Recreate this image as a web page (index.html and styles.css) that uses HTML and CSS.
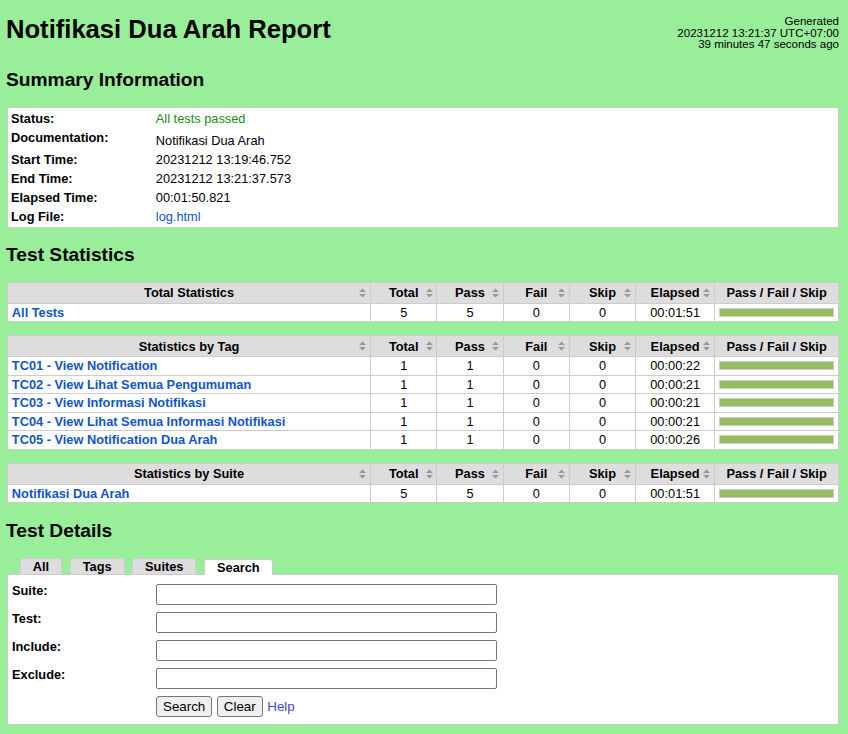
FILE: index.html
```html
<!DOCTYPE html>
<html lang="id">
<head>
<meta charset="utf-8">
<title>Notifikasi Dua Arah Report</title>
<link rel="stylesheet" href="styles.css">
</head>
<body>
<div class="page">
  <div class="header">
    <h1>Notifikasi Dua Arah Report</h1>
    <div class="generated">Generated<br>20231212 13:21:37 UTC+07:00<br>39 minutes 47 seconds ago</div>
  </div>

  <h2>Summary Information</h2>
  <table class="details">
    <tr><th>Status:</th><td class="pass">All tests passed</td></tr>
    <tr><th>Documentation:</th><td><div class="doc">Notifikasi Dua Arah</div></td></tr>
    <tr><th>Start Time:</th><td>20231212 13:19:46.752</td></tr>
    <tr><th>End Time:</th><td>20231212 13:21:37.573</td></tr>
    <tr><th>Elapsed Time:</th><td>00:01:50.821</td></tr>
    <tr><th>Log File:</th><td><a href="#">log.html</a></td></tr>
  </table>

  <h2>Test Statistics</h2>

  <table class="statistics">
    <thead>
      <tr>
        <th class="col-name"><div class="th-inner"><span class="th-text">Total Statistics</span><svg class="sort" width="7" height="10" viewBox="0 0 7 10"><path d="M3.5 0.5 7 4H0z M0 6h7L3.5 9.5z"/></svg></div></th>
        <th class="col-stat"><div class="th-inner"><span class="th-text">Total</span><svg class="sort" width="7" height="10" viewBox="0 0 7 10"><path d="M3.5 0.5 7 4H0z M0 6h7L3.5 9.5z"/></svg></div></th>
        <th class="col-stat"><div class="th-inner"><span class="th-text">Pass</span><svg class="sort" width="7" height="10" viewBox="0 0 7 10"><path d="M3.5 0.5 7 4H0z M0 6h7L3.5 9.5z"/></svg></div></th>
        <th class="col-stat"><div class="th-inner"><span class="th-text">Fail</span><svg class="sort" width="7" height="10" viewBox="0 0 7 10"><path d="M3.5 0.5 7 4H0z M0 6h7L3.5 9.5z"/></svg></div></th>
        <th class="col-stat"><div class="th-inner"><span class="th-text">Skip</span><svg class="sort" width="7" height="10" viewBox="0 0 7 10"><path d="M3.5 0.5 7 4H0z M0 6h7L3.5 9.5z"/></svg></div></th>
        <th class="col-elapsed"><div class="th-inner"><span class="th-text">Elapsed</span><svg class="sort" width="7" height="10" viewBox="0 0 7 10"><path d="M3.5 0.5 7 4H0z M0 6h7L3.5 9.5z"/></svg></div></th>
        <th class="col-graph">Pass / Fail / Skip</th>
      </tr>
    </thead>
    <tbody>
      <tr><td><a class="stat-name" href="#">All Tests</a></td><td class="num">5</td><td class="num">5</td><td class="num">0</td><td class="num">0</td><td class="num">00:01:51</td><td><div class="graph"><div class="pass-bar"></div></div></td></tr>
    </tbody>
  </table>

  <table class="statistics">
    <thead>
      <tr>
        <th class="col-name"><div class="th-inner"><span class="th-text">Statistics by Tag</span><svg class="sort" width="7" height="10" viewBox="0 0 7 10"><path d="M3.5 0.5 7 4H0z M0 6h7L3.5 9.5z"/></svg></div></th>
        <th class="col-stat"><div class="th-inner"><span class="th-text">Total</span><svg class="sort" width="7" height="10" viewBox="0 0 7 10"><path d="M3.5 0.5 7 4H0z M0 6h7L3.5 9.5z"/></svg></div></th>
        <th class="col-stat"><div class="th-inner"><span class="th-text">Pass</span><svg class="sort" width="7" height="10" viewBox="0 0 7 10"><path d="M3.5 0.5 7 4H0z M0 6h7L3.5 9.5z"/></svg></div></th>
        <th class="col-stat"><div class="th-inner"><span class="th-text">Fail</span><svg class="sort" width="7" height="10" viewBox="0 0 7 10"><path d="M3.5 0.5 7 4H0z M0 6h7L3.5 9.5z"/></svg></div></th>
        <th class="col-stat"><div class="th-inner"><span class="th-text">Skip</span><svg class="sort" width="7" height="10" viewBox="0 0 7 10"><path d="M3.5 0.5 7 4H0z M0 6h7L3.5 9.5z"/></svg></div></th>
        <th class="col-elapsed"><div class="th-inner"><span class="th-text">Elapsed</span><svg class="sort" width="7" height="10" viewBox="0 0 7 10"><path d="M3.5 0.5 7 4H0z M0 6h7L3.5 9.5z"/></svg></div></th>
        <th class="col-graph">Pass / Fail / Skip</th>
      </tr>
    </thead>
    <tbody>
      <tr><td><a class="stat-name" href="#">TC01 - View Notification</a></td><td class="num">1</td><td class="num">1</td><td class="num">0</td><td class="num">0</td><td class="num">00:00:22</td><td><div class="graph"><div class="pass-bar"></div></div></td></tr>
      <tr><td><a class="stat-name" href="#">TC02 - View Lihat Semua Pengumuman</a></td><td class="num">1</td><td class="num">1</td><td class="num">0</td><td class="num">0</td><td class="num">00:00:21</td><td><div class="graph"><div class="pass-bar"></div></div></td></tr>
      <tr><td><a class="stat-name" href="#">TC03 - View Informasi Notifikasi</a></td><td class="num">1</td><td class="num">1</td><td class="num">0</td><td class="num">0</td><td class="num">00:00:21</td><td><div class="graph"><div class="pass-bar"></div></div></td></tr>
      <tr><td><a class="stat-name" href="#">TC04 - View Lihat Semua Informasi Notifikasi</a></td><td class="num">1</td><td class="num">1</td><td class="num">0</td><td class="num">0</td><td class="num">00:00:21</td><td><div class="graph"><div class="pass-bar"></div></div></td></tr>
      <tr><td><a class="stat-name" href="#">TC05 - View Notification Dua Arah</a></td><td class="num">1</td><td class="num">1</td><td class="num">0</td><td class="num">0</td><td class="num">00:00:26</td><td><div class="graph"><div class="pass-bar"></div></div></td></tr>
    </tbody>
  </table>

  <table class="statistics">
    <thead>
      <tr>
        <th class="col-name"><div class="th-inner"><span class="th-text">Statistics by Suite</span><svg class="sort" width="7" height="10" viewBox="0 0 7 10"><path d="M3.5 0.5 7 4H0z M0 6h7L3.5 9.5z"/></svg></div></th>
        <th class="col-stat"><div class="th-inner"><span class="th-text">Total</span><svg class="sort" width="7" height="10" viewBox="0 0 7 10"><path d="M3.5 0.5 7 4H0z M0 6h7L3.5 9.5z"/></svg></div></th>
        <th class="col-stat"><div class="th-inner"><span class="th-text">Pass</span><svg class="sort" width="7" height="10" viewBox="0 0 7 10"><path d="M3.5 0.5 7 4H0z M0 6h7L3.5 9.5z"/></svg></div></th>
        <th class="col-stat"><div class="th-inner"><span class="th-text">Fail</span><svg class="sort" width="7" height="10" viewBox="0 0 7 10"><path d="M3.5 0.5 7 4H0z M0 6h7L3.5 9.5z"/></svg></div></th>
        <th class="col-stat"><div class="th-inner"><span class="th-text">Skip</span><svg class="sort" width="7" height="10" viewBox="0 0 7 10"><path d="M3.5 0.5 7 4H0z M0 6h7L3.5 9.5z"/></svg></div></th>
        <th class="col-elapsed"><div class="th-inner"><span class="th-text">Elapsed</span><svg class="sort" width="7" height="10" viewBox="0 0 7 10"><path d="M3.5 0.5 7 4H0z M0 6h7L3.5 9.5z"/></svg></div></th>
        <th class="col-graph">Pass / Fail / Skip</th>
      </tr>
    </thead>
    <tbody>
      <tr><td><a class="stat-name" href="#">Notifikasi Dua Arah</a></td><td class="num">5</td><td class="num">5</td><td class="num">0</td><td class="num">0</td><td class="num">00:01:51</td><td><div class="graph"><div class="pass-bar"></div></div></td></tr>
    </tbody>
  </table>

  <h2 class="details-heading">Test Details</h2>
  <div class="tabs">
    <div class="tab">All</div>
    <div class="tab">Tags</div>
    <div class="tab">Suites</div>
    <div class="tab tab-selected">Search</div>
  </div>
  <div class="panel">
    <div class="search-form">
      <label class="search-label">Suite:</label><input class="search-input" type="text">
      <label class="search-label">Test:</label><input class="search-input" type="text">
      <label class="search-label">Include:</label><input class="search-input" type="text">
      <label class="search-label">Exclude:</label><input class="search-input" type="text">
      <span></span>
      <div class="search-actions">
        <button class="btn" type="button">Search</button>
        <button class="btn" type="button">Clear</button>
        <a class="help" href="#">Help</a>
      </div>
    </div>
  </div>
</div>
</body>
</html>
```

FILE: styles.css
```css
html, body {
  margin: 0;
  background: #99ee99;
}
body {
  font-family: "Liberation Sans", Arial, sans-serif;
  font-size: 12.8px;
  color: #000;
  padding: 0 0 0 6px;
}
.page {
  width: 833px;
}
a {
  color: #1155cc;
  text-decoration: none;
}

/* header */
.header {
  display: flex;
  justify-content: space-between;
  align-items: flex-start;
  padding-top: 14px;
  height: 39px;
}
h1 {
  margin: 1px 0 0;
  font-size: 25.6px;
  font-weight: bold;
}
.generated {
  margin-top: 2px;
  font-size: 11.52px;
  line-height: 11.7px;
  text-align: right;
  white-space: nowrap;
}
h2 {
  font-size: 19.2px;
  font-weight: bold;
  margin: 15.9px 0;
}
.details-heading {
  margin-top: 17px;
}

/* summary */
.details {
  margin: 1px 0 0 1px;
  width: 832px;
  background: #fff;
  border: 1px solid #ccc;
  border-spacing: 2px;
  table-layout: fixed;
  font-size: 12.8px;
  line-height: 15px;
}
.details th {
  width: 140.8px;
  padding: 1px;
  text-align: left;
  vertical-align: top;
  font-weight: bold;
  white-space: nowrap;
}
.details td {
  padding: 1px;
  vertical-align: top;
}
.details .doc {
  padding-top: 3px;
}
.pass {
  color: #228b22;
}

/* statistics */
.statistics {
  margin: 1px 0 12.8px 1px;
  width: 832px;
  border-collapse: collapse;
  table-layout: fixed;
  background: #fff;
  font-size: 12.8px;
  line-height: 15px;
}
.statistics th,
.statistics td {
  border: 1px solid #ccc;
}
.statistics th {
  background: #dddddd;
  padding: 0.2em 0.3em;
  font-weight: bold;
  text-align: center;
  vertical-align: top;
}
.statistics td {
  padding: 0.1em 0.3em;
  vertical-align: middle;
}
.col-stat { width: 4.5em; }
.col-elapsed { width: 5.5em; }
.col-graph { width: 9em; }
.th-inner {
  display: grid;
  grid-template-columns: 1fr auto 1fr;
  align-items: center;
}
.th-text {
  grid-column: 2;
  white-space: nowrap;
}
.sort {
  grid-column: 3;
  justify-self: end;
  fill: #999999;
  display: block;
}
.stat-name {
  font-weight: bold;
}
.num {
  text-align: center;
}
.graph {
  border: 1px solid #ccc;
  height: 7px;
  background: #f2f2f2;
}
.pass-bar {
  height: 100%;
  width: 100%;
  background: #97bd61;
}

/* tabs */
.tabs {
  display: flex;
  align-items: flex-start;
  gap: 7.5px;
  margin-left: 13.8px;
  height: 16px;
  position: relative;
  z-index: 1;
}
.tab {
  background: #dddddd;
  border: 1px solid #ccc;
  border-bottom: 0;
  border-radius: 3px 3px 0 0;
  padding: 0 12px;
  font-weight: bold;
  line-height: 15px;
  height: 15px;
}
.tab-selected {
  background: #fff;
  position: relative;
  top: 1px;
}

/* search panel */
.panel {
  margin-left: 1px;
  background: #fff;
  border: 1px solid #ccc;
  padding: 9px 0 7px 4px;
  box-sizing: border-box;
  width: 832px;
}
.search-form {
  display: grid;
  grid-template-columns: 144px auto;
  row-gap: 7px;
  justify-content: start;
}
.search-label {
  font-weight: bold;
  line-height: 15px;
  margin-top: -1px;
}
.search-input {
  box-sizing: border-box;
  width: 341px;
  height: 21px;
  margin: 0;
  border: 1px solid #767676;
  border-radius: 2px;
  padding: 1px 2px;
  background: #fff;
}
.search-actions {
  display: flex;
  align-items: center;
  gap: 4.6px;
  height: 21px;
}
.btn {
  box-sizing: border-box;
  height: 21px;
  margin: 0;
  padding: 1px 6px;
  font-family: "Liberation Sans", Arial, sans-serif;
  font-size: 13.33px;
  color: #000;
  background: #efefef;
  border: 1px solid #767676;
  border-radius: 3px;
}
.help {
  color: #4a44d6;
  font-size: 13.33px;
}
```
